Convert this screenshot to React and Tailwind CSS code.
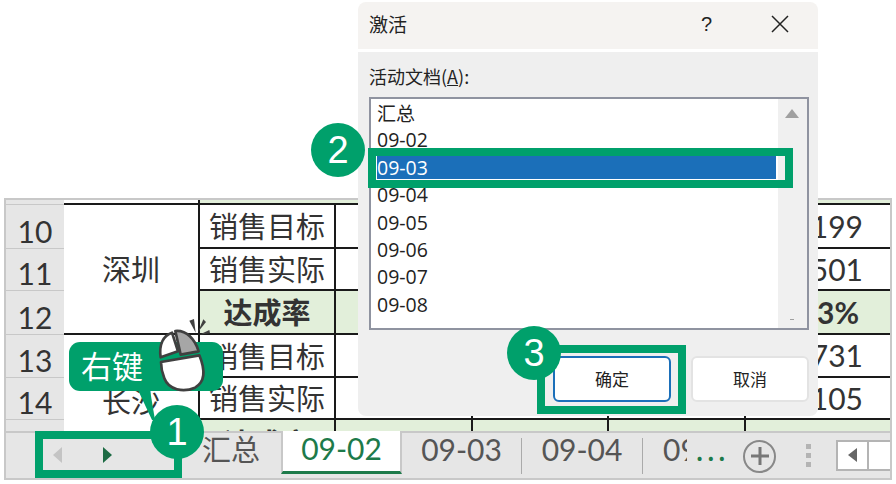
import React from 'react';

const cjk = '"Noto Sans CJK SC", sans-serif';
const green = 'bg-[#00a06b]';

// one spreadsheet row: number, (city cell spans), label, four values
const rows = [
  { n: '10', label: '销售目标', h: 'h-[44px]', last: '4199' },
  { n: '11', label: '销售实际', h: 'h-[42px]', last: '3501' },
  { n: '12', label: '达成率', h: 'h-[44px]', last: '83%', total: true },
  { n: '13', label: '销售目标', h: 'h-[43px]', last: '4731' },
  { n: '14', label: '销售实际', h: 'h-[42px]', last: '4105' },
];

function SheetRow({ row }) {
  const bg = row.total ? 'bg-[#e2efda]' : 'bg-white';
  const weight = row.total ? 'font-bold' : '';
  return (
    <div className={`flex ${row.h} border-b-2 border-[#1a1a1a] text-[#333]`}>
      <div className="w-[136px] shrink-0 border-r-2 border-[#1a1a1a]">
        <div className={`flex h-full items-center justify-center text-[29px] ${bg} ${weight}`}>{row.label}</div>
      </div>
      {[0, 1, 2].map((i) => (
        <div key={i} className={`w-[136.5px] shrink-0 border-r-2 border-[#1a1a1a] ${bg}`} />
      ))}
      <div className={`flex-1 flex items-center justify-end font-['Lato'] text-[30px] ${row.total ? 'pr-[31px]' : 'pr-[27px]'} ${bg} ${weight}`}>{row.last}</div>
    </div>
  );
}

function Tab({ children, w }) {
  return <div className={`${w} shrink-0 flex items-center justify-center pb-[10px] text-[30px] leading-none text-[#555] font-['Lato']`}>{children}</div>;
}

function Step({ n, className }) {
  return (
    <div className={`absolute w-[54px] h-[54px] rounded-full ${green} text-white text-[38px] font-['Liberation_Sans'] flex items-center justify-center ${className}`}>
      {n}
    </div>
  );
}

function MouseIcon() {
  return (
    <svg className="absolute left-[60px] top-[310px]" width="170" height="150" viewBox="0 0 510 450" fill="none">
      <path d="M302 142C296 104 310 76 336 68L354 124Z" fill="#fff" stroke="#404040" strokeWidth="8" strokeLinejoin="round" />
      <path d="M346 63C380 60 405 88 416 124L362 134Z" fill="#a6a6a6" stroke="#404040" strokeWidth="8" strokeLinejoin="round" />
      <path d="M303 156L418 136C436 180 436 216 405 233C370 248 326 240 313 205C306 188 303 172 303 156Z" fill="#fff" stroke="#404040" strokeWidth="8" strokeLinejoin="round" />
      <path d="M388 32L402 27L407 68Z" fill="#404040" />
      <path d="M430 28L438 36L414 66Z" fill="#404040" />
      <path d="M448 60L450 70L418 74Z" fill="#404040" />
    </svg>
  );
}

function Dialog() {
  const items = ['09-02', '09-03', '09-04', '09-05', '09-06', '09-07', '09-08'];
  return (
    <div className="absolute left-[358px] top-[2px] w-[460px] h-[414px] rounded-[8px] overflow-hidden flex flex-col bg-white" style={{ fontFamily: cjk }}>
      <div className="h-[47px] shrink-0 bg-[#f5f3f1] flex items-center pl-[11px] pb-[3px] text-[19px] text-[#222]">
        <span>激活</span>
        <span className="ml-[294px] font-['Liberation_Sans'] text-[20px]">?</span>
        <svg className="ml-[59px]" width="18" height="18" viewBox="0 0 18 18" stroke="#222" strokeWidth="1.5">
          <path d="M1 1L17 17M17 1L1 17" />
        </svg>
      </div>
      <div className="mt-[3px] flex-1 bg-[#efefef] px-[11px] flex flex-col">
        <div className="mt-[11px] h-[27px] text-[18px] text-[#222] leading-[27px]">
          活动文档(<span className="underline">A</span>):
        </div>
        <div className="mt-[7px] h-[233px] w-[440px] border-2 border-[#8f93a0] bg-white flex">
          <div className="flex-1 pl-[6px] text-[19px] leading-[27.4px] text-[#222]">
            <div>汇总</div>
            {items.map((t) => (
              <div key={t} className={t === '09-03' ? 'h-[23px] my-[2.2px] mr-[-5px] flex items-center justify-between bg-[#1b6fb9] text-white' : 'h-[27.4px] flex items-center'}>
                <span className="font-['Open_Sans'] text-[19.5px] leading-none">{t}</span>
                {t === '09-03' && <span className="w-[7px] h-full bg-white" />}
              </div>
            ))}
          </div>
          <div className="w-[29px] shrink-0 bg-[#f0f0f0] relative">
            <div className="absolute left-[7px] top-[10px] w-0 h-0 border-x-[7px] border-x-transparent border-b-[9px] border-b-[#a0a0a0]" />
            <div className="absolute left-[12px] bottom-[8px] w-[4px] h-[1px] bg-[#a0a0a0]" />
          </div>
        </div>
        <div className="mt-[26px] mr-[-2px] flex justify-end gap-[20px]">
          <button className="w-[118px] h-[46px] rounded-[6px] border-2 border-[#1b6fb9] bg-white text-[17px] text-[#222]">确定</button>
          <button className="w-[118px] h-[46px] rounded-[6px] border-2 border-[#e3e3e3] bg-white text-[17px] text-[#222]">取消</button>
        </div>
      </div>
    </div>
  );
}

export default function App() {
  return (
    <div className="relative w-[896px] h-[484px] overflow-hidden bg-white" style={{ fontFamily: cjk }}>
      <div className="pt-[198px] px-[4px]">
        <div className="h-[282px] border-2 border-[#c8c8c8] flex flex-col overflow-hidden">
          <div className="h-[231px] shrink-0 flex overflow-hidden">
            {/* row numbers */}
            <div className="w-[58px] shrink-0 bg-[#e6e6e6] text-[30px] font-['Lato'] text-[#333] flex flex-col">
              <div className="h-[5px] shrink-0 border-b border-[#c8c8c8]" />
              {rows.map((r) => (
                <div key={r.n} className={`${r.h} shrink-0 border-b border-[#c8c8c8] flex items-end justify-center leading-[34px]`}>{r.n}</div>
              ))}
            </div>
            {/* sheet body */}
            <div className="flex-1 flex flex-col">
              <div className="h-[5px] shrink-0 flex border-b-2 border-[#1a1a1a]">
                <div className="w-[136px] bg-white border-r-2 border-[#1a1a1a]" />
                <div className="flex-1 bg-[#e2efda]" />
              </div>
              <div className="flex">
                <div className="w-[136px] shrink-0 flex flex-col border-r-2 border-[#1a1a1a] text-[29px] text-[#333]">
                  <div className="h-[130px] flex items-center justify-center border-b-2 border-[#1a1a1a]">深圳</div>
                  <div className="h-[96px] flex items-end justify-center bg-white pb-[3px] leading-[56px]">长沙</div>
                </div>
                <div className="flex-1">
                  {rows.map((r) => <SheetRow key={r.n} row={r} />)}
                  <div className="h-[16px] flex bg-[#e2efda] text-[#333] font-bold text-[29px] leading-[44px] text-center">
                    <div className="w-[136px] border-r-2 border-[#1a1a1a]">达成率</div>
                    {['50%', '57%', '54%'].map((v) => (
                      <div key={v} className="w-[136.5px] border-r-2 border-[#1a1a1a] font-['Lato']">{v}</div>
                    ))}
                    <div className="w-[136.5px] font-['Lato']">58%</div>
                  </div>
                </div>
              </div>
            </div>
          </div>
          {/* sheet tabs */}
          <div className="h-[47px] shrink-0 bg-[#e6e6e6] border-t-2 border-[#c8c8c8] flex items-stretch pb-[4px]">
            <div className="w-[31px] shrink-0" />
            <div className="w-[147px] shrink-0 flex items-center pl-[16px] pt-[3px]">
              <div className="w-0 h-0 border-y-[8px] border-y-transparent border-r-[9px] border-r-[#c4c4c4]" />
              <div className="ml-[41px] w-0 h-0 border-y-[8px] border-y-transparent border-l-[9px] border-l-[#1d6b44]" />
            </div>
            <div className="w-[18px] shrink-0" />
            <div className="w-[58px] shrink-0 flex items-center justify-center pb-[10px] text-[29px] leading-none text-[#555]">汇总</div>
            <div className="w-[21px] shrink-0" />
            <div className="w-[121px] shrink-0 -mt-[2px] bg-white border-l-2 border-r-2 border-[#c8c8c8] border-b-[3px] border-b-[#1d7a4a] flex items-center justify-center pb-[6px] text-[30px] leading-none text-[#1d7a4a] font-['Lato']">09-02</div>
            <Tab w="w-[119px]">09-03</Tab>
            <div className="w-px mt-[5px] bg-[#aaa]" />
            <Tab w="w-[120px]">09-04</Tab>
            <div className="w-px mt-[5px] bg-[#aaa]" />
            <div className="w-[24px] ml-[20px] shrink-0 overflow-hidden flex items-center pb-[10px] text-[30px] leading-none text-[#555] font-['Lato']">09</div>
            <div className="w-[25px] ml-[9px] shrink-0 flex items-center pb-[6px] text-[22px] leading-none font-bold text-[#1d7a4a] tracking-[4px]">...</div>
            <div className="w-[33px] h-[33px] self-center mt-[5px] ml-[22px] shrink-0 rounded-full border-2 border-[#888] flex items-center justify-center">
              <svg width="20" height="20" viewBox="0 0 20 20" stroke="#777" strokeWidth="3"><path d="M10 1V19M1 10H19" /></svg>
            </div>
            <div className="ml-[30px] shrink-0 self-center mt-[3px] flex flex-col gap-[4px]">
              <div className="w-[5px] h-[5px] bg-[#b4b4b4]" />
              <div className="w-[5px] h-[5px] bg-[#b4b4b4]" />
              <div className="w-[5px] h-[5px] bg-[#b4b4b4]" />
            </div>
            <div className="ml-[25px] self-center mt-[3px] h-[31px] w-[33px] shrink-0 bg-white border-2 border-[#b4b4b4] flex items-center justify-center">
              <div className="w-0 h-0 border-y-[7px] border-y-transparent border-r-[9px] border-r-[#666]" />
            </div>
            <div className="self-center mt-[3px] h-[31px] flex-1 bg-white border-y-2 border-[#b4b4b4]" />
          </div>
        </div>
      </div>

      <Dialog />

      {/* callout frames */}
      <div className="absolute left-[368px] top-[148px] w-[425px] h-[40px] border-[8px] border-[#00a06b]" />
      <div className="absolute left-[537px] top-[345px] w-[149px] h-[69px] border-[8px] border-[#00a06b]" />
      <div className="absolute left-[35px] top-[431px] w-[147px] h-[47px] border-[8px] border-[#00a06b]" />

      {/* right click bubble */}
      <div className={`absolute left-[69px] top-[342px] w-[154px] h-[49px] rounded-[11px] ${green} text-white text-[31px] pl-[12px] leading-[46px]`}>右键</div>
      <svg className="absolute left-[130px] top-[388px]" width="30" height="36" viewBox="0 0 30 36">
        <path d="M8 2L22 32L25 32L20 2Z" fill="#00a06b" />
      </svg>
      <MouseIcon />

      <Step n="1" className="left-[150px] top-[405px]" />
      <Step n="2" className="left-[311px] top-[123px]" />
      <Step n="3" className="left-[507px] top-[326px]" />
    </div>
  );
}
